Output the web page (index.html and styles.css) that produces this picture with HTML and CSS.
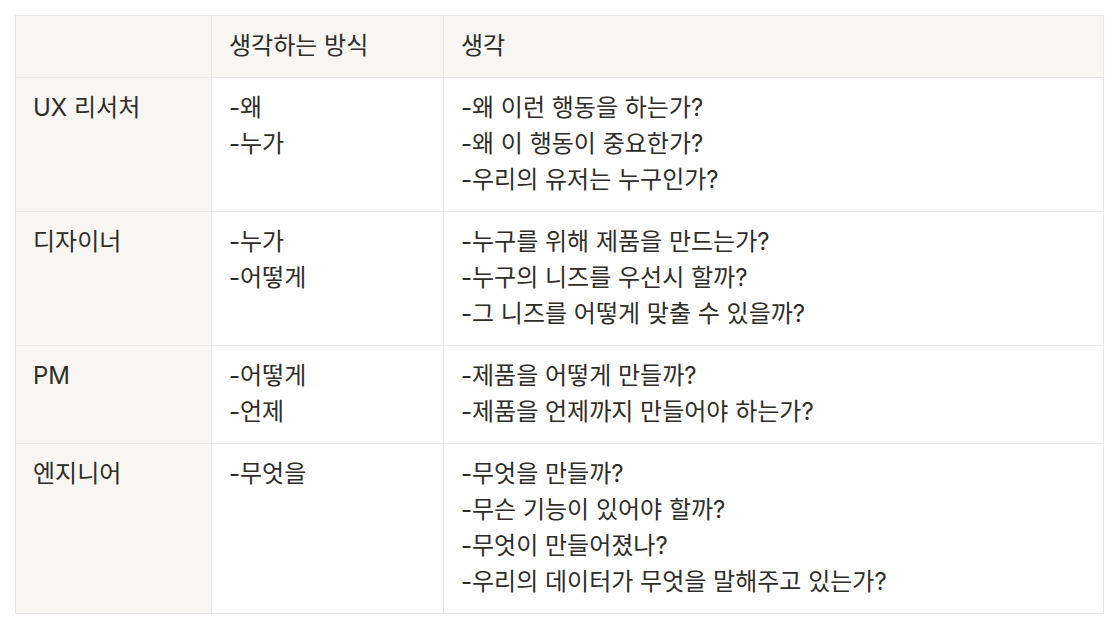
FILE: index.html
```html
<!DOCTYPE html>
<html lang="ko">
<head>
<meta charset="utf-8">
<title>생각하는 방식</title>
<link rel="stylesheet" href="styles.css">
</head>
<body>
<table class="grid">
  <colgroup>
    <col class="c-role">
    <col class="c-way">
    <col class="c-thought">
  </colgroup>
  <thead>
    <tr>
      <th class="head"></th>
      <th class="head">생각하는 방식</th>
      <th class="head">생각</th>
    </tr>
  </thead>
  <tbody>
    <tr>
      <th class="role">UX 리서처</th>
      <td>-왜<br>-누가</td>
      <td>-왜 이런 행동을 하는가?<br>-왜 이 행동이 중요한가?<br>-우리의 유저는 누구인가?</td>
    </tr>
    <tr>
      <th class="role">디자이너</th>
      <td>-누가<br>-어떻게</td>
      <td>-누구를 위해 제품을 만드는가?<br>-누구의 니즈를 우선시 할까?<br>-그 니즈를 어떻게 맞출 수 있을까?</td>
    </tr>
    <tr>
      <th class="role">PM</th>
      <td>-어떻게<br>-언제</td>
      <td>-제품을 어떻게 만들까?<br>-제품을 언제까지 만들어야 하는가?</td>
    </tr>
    <tr>
      <th class="role">엔지니어</th>
      <td>-무엇을</td>
      <td>-무엇을 만들까?<br>-무슨 기능이 있어야 할까?<br>-무엇이 만들어졌나?<br>-우리의 데이터가 무엇을 말해주고 있는가?</td>
    </tr>
  </tbody>
</table>
</body>
</html>
```

FILE: styles.css
```css
html, body {
  margin: 0;
  padding: 0;
  background: #ffffff;
}
body {
  padding: 15px;
  font-family: Inter, "Noto Sans CJK KR", sans-serif;
  font-size: 24px;
  line-height: 36px;
  color: #2f2d28;
}
.grid {
  border-collapse: collapse;
  table-layout: fixed;
  width: 1089px;
}
.c-role { width: 196px; }
.c-way { width: 232px; }
.grid th,
.grid td {
  border: 1px solid #e9e9e7;
  padding: 12px 17px 13px 17px;
  vertical-align: top;
  text-align: left;
  font-weight: 400;
}
.grid .head,
.grid .role {
  background: #f7f6f3;
}
```
